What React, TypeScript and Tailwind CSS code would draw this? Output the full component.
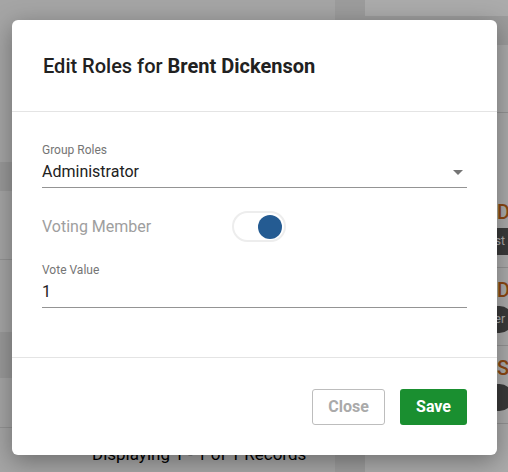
import { useState } from 'react';

const font = { fontFamily: 'Roboto, "Liberation Sans", sans-serif' };

// Page behind the dialog: member table on the left, roles list on the right
function BackgroundPage() {
    return (
        <div className="flex h-[472px] w-[508px] overflow-hidden bg-[#e9e9e9]" style={font}>
            <div className="flex w-[335px] shrink-0 flex-col bg-[#f7f7f7]">
                <div className="h-[162px]" />
                <div className="h-[29px] bg-[#e4e4e4]" />
                <div className="h-[69px] border-b border-[#dcdcdc]" />
                <div className="h-[72px]" />
                <div className="h-[46px] bg-[#e4e4e4]" />
                <div className="h-[50px] border-b border-[#dcdcdc]" />
                <div className="whitespace-nowrap pl-[92px] pt-[14px] text-[17px] text-black">
                    Displaying 1 - 1 of 1 Records
                </div>
            </div>
            <div className="ml-[30px] flex w-[143px] shrink-0 flex-col overflow-hidden">
                <div className="h-[17px] bg-white" />
                <div className="h-[30px]" />
                <div className="flex flex-col bg-white">
                    <div className="h-[68px] border-b border-[#dcdcdc]" />
                    <div className="h-[77px]" />
                    <RoleRow name="Dan" chip="Assist" />
                    <RoleRow name="Don" chip="Member" round />
                    <RoleRow name="Smith" chip="" round />
                    <div className="h-[48px]" />
                </div>
            </div>
        </div>
    );
}

function RoleRow({ name, chip, round }: { name: string; chip: string; round?: boolean }) {
    return (
        <div className="flex h-[78px] flex-col gap-[4px] border-b border-[#dcdcdc] pt-[10px]">
            <span className="whitespace-nowrap pl-[132px] text-[20px] font-medium leading-[24px] text-[#cf6a1c]">
                {name}
            </span>
            <span
                className={`ml-[76px] h-[27px] w-[72px] shrink-0 bg-[#575757] px-2 text-right text-[12px] leading-[27px] text-white ${round ? 'rounded-full' : ''}`}
            >
                {chip}
            </span>
        </div>
    );
}

function UnderlineField({ label, children }: { label: string; children: React.ReactNode }) {
    return (
        <div className="flex flex-col">
            <label className="text-[12px] leading-[14px] text-[#757575]">{label}</label>
            <div className="flex h-[31px] items-center border-b border-[#949494]">{children}</div>
        </div>
    );
}

export default function App() {
    const [voting, setVoting] = useState(true);

    return (
        <div className="relative h-[472px] w-[508px] overflow-hidden">
            <BackgroundPage />
            <div className="absolute inset-0 bg-black/[0.33]" />

            <div
                className="absolute left-[12px] top-[20px] flex h-[435px] w-[485px] flex-col rounded-[6px] bg-white shadow-[0_6px_24px_rgba(0,0,0,0.35)]"
                style={font}
            >
                <div className="flex h-[92px] items-center border-b border-[#e4e4e4] px-[31px] pt-[1px]">
                    <h2 className="text-[20px] font-medium text-[#212121]">
                        Edit Roles for <span className="font-bold">Brent Dickenson</span>
                    </h2>
                </div>

                <div className="flex h-[246px] flex-col border-b border-[#e4e4e4] px-[30px] pt-[31px]">
                    <UnderlineField label="Group Roles">
                        <span className="flex-1 text-[16px] text-[#212121]">Administrator</span>
                        <svg width="10" height="5" viewBox="0 0 10 5" className="mr-[4px]">
                            <path d="M0 0h10L5 5z" fill="#757575" />
                        </svg>
                    </UnderlineField>

                    <div className="mt-[23px] flex items-center">
                        <span className="w-[190px] text-[16px] text-[#9e9e9e]">Voting Member</span>
                        <button
                            type="button"
                            onClick={() => setVoting(!voting)}
                            className={`flex h-[31px] w-[54px] items-center rounded-full border-2 border-[#ededed] bg-white px-[2px] ${voting ? 'justify-end' : 'justify-start'}`}
                        >
                            <span className="h-[24px] w-[24px] rounded-full bg-[#245b92]" />
                        </button>
                    </div>

                    <div className="mt-[21px]">
                        <UnderlineField label="Vote Value">
                            <span className="text-[16px] text-[#212121]">1</span>
                        </UnderlineField>
                    </div>
                </div>

                <div className="flex flex-1 items-start justify-end gap-[15px] px-[30px] pt-[31px]">
                    <button
                        type="button"
                        className="h-[36px] w-[73px] rounded-[3px] border border-[#bdbdbd] bg-white text-[16px] font-bold text-[#aaaaaa]"
                    >
                        Close
                    </button>
                    <button
                        type="button"
                        className="h-[36px] w-[67px] rounded-[3px] bg-[#1a8f30] text-[16px] font-bold text-white"
                    >
                        Save
                    </button>
                </div>
            </div>
        </div>
    );
}
